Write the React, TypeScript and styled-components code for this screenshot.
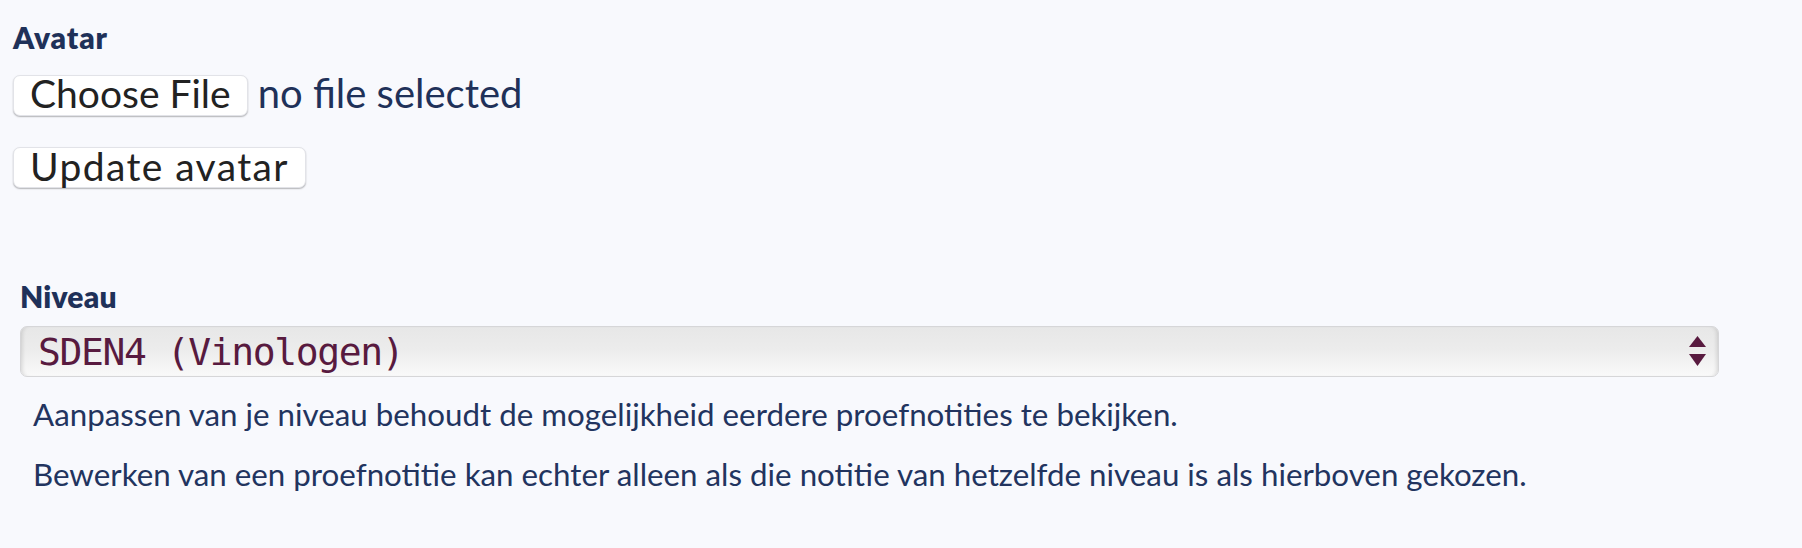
import React from 'react';
import styled, { createGlobalStyle } from 'styled-components';

const navy = '#1f3159';
const wine = '#581a3f';

const GlobalStyle = createGlobalStyle`
  html, body {
    margin: 0;
    padding: 0;
    background: #f8f9fd;
  }
  body {
    font-family: Lato, "Noto Sans", sans-serif;
    color: ${navy};
  }
`;

const Page = styled.div`
  padding: 0 0 40px 13px;
  width: 1705px;
`;

const Section = styled.section<{ $indent?: number; $gap?: number }>`
  display: flex;
  flex-direction: column;
  align-items: flex-start;
  margin-left: ${(p) => p.$indent || 0}px;
  margin-top: ${(p) => p.$gap || 0}px;
`;

const Label = styled.label<{ $spacing?: number }>`
  display: block;
  font-size: 30px;
  line-height: 36px;
  font-weight: 800;
  color: ${navy};
  letter-spacing: ${(p) => p.$spacing ?? 0.2}px;
`;

const FileRow = styled.div`
  display: flex;
  align-items: center;
  gap: 10px;
  margin-top: 18px;
`;

const Button = styled.button<{ $top?: number; $spacing?: number }>`
  box-sizing: border-box;
  height: 41px;
  margin-top: ${(p) => p.$top || 0}px;
  padding: 0 16px 3px;
  display: inline-flex;
  align-items: center;
  background: #fff;
  border: 1px solid #e2e3e8;
  border-radius: 7px;
  box-shadow: 0 1px 1.5px rgba(0, 0, 0, 0.28);
  font-family: Lato, "Noto Sans", sans-serif;
  font-size: 39px;
  line-height: 1;
  letter-spacing: ${(p) => p.$spacing || 0}px;
  color: #222;
  cursor: pointer;
`;

const FileStatus = styled.span`
  font-size: 40px;
  line-height: 41px;
  padding-bottom: 3px;
  color: ${navy};
`;

const SelectWrap = styled.div`
  position: relative;
  width: 1699px;
  margin-top: 12px;
`;

const Select = styled.select`
  box-sizing: border-box;
  appearance: none;
  -webkit-appearance: none;
  width: 100%;
  height: 51px;
  padding: 0 60px 0 17px;
  border: 1px solid #d6d6d8;
  border-radius: 7px;
  background: linear-gradient(to bottom, #e7e7e7 0%, #ececec 45%, #f9f9f9 100%);
  box-shadow: inset 4px 0 4px -3px rgba(0, 0, 0, 0.14),
    inset -4px 0 4px -3px rgba(0, 0, 0, 0.14);
  font-family: "DejaVu Sans Mono", monospace;
  font-size: 38px;
  letter-spacing: -1.4px;
  color: ${wine};
  outline: none;
`;

const Arrows = styled.svg`
  position: absolute;
  right: 12px;
  top: 9px;
  pointer-events: none;
`;

const Help = styled.p<{ $top: number }>`
  margin: ${(p) => p.$top}px 0 0 13px;
  font-size: 31.3px;
  line-height: 37px;
  color: #22345f;
`;

const App: React.FC = () => {
  return (
    <>
      <GlobalStyle />
      <Page>
        <Section $gap={19}>
          <Label $spacing={0.9}>Avatar</Label>
          <FileRow>
            <Button>Choose File</Button>
            <FileStatus>no file selected</FileStatus>
          </FileRow>
          <Button $top={30} $spacing={1.4}>Update avatar</Button>
        </Section>

        <Section $indent={7} $gap={90}>
          <Label htmlFor="niveau">Niveau</Label>
          <SelectWrap>
            <Select id="niveau" defaultValue="sden4">
              <option value="sden4">SDEN4 (Vinologen)</option>
            </Select>
            <Arrows width="19" height="32" viewBox="0 0 19 32">
              <polygon points="9.5,1 18,12 1,12" fill={wine} />
              <polygon points="1,19 18,19 9.5,31" fill={wine} />
            </Arrows>
          </SelectWrap>
          <Help $top={19}>
            Aanpassen van je niveau behoudt de mogelijkheid eerdere proefnotities te bekijken.
          </Help>
          <Help $top={23}>
            Bewerken van een proefnotitie kan echter alleen als die notitie van hetzelfde niveau is als hierboven gekozen.
          </Help>
        </Section>
      </Page>
    </>
  );
};

export default App;
